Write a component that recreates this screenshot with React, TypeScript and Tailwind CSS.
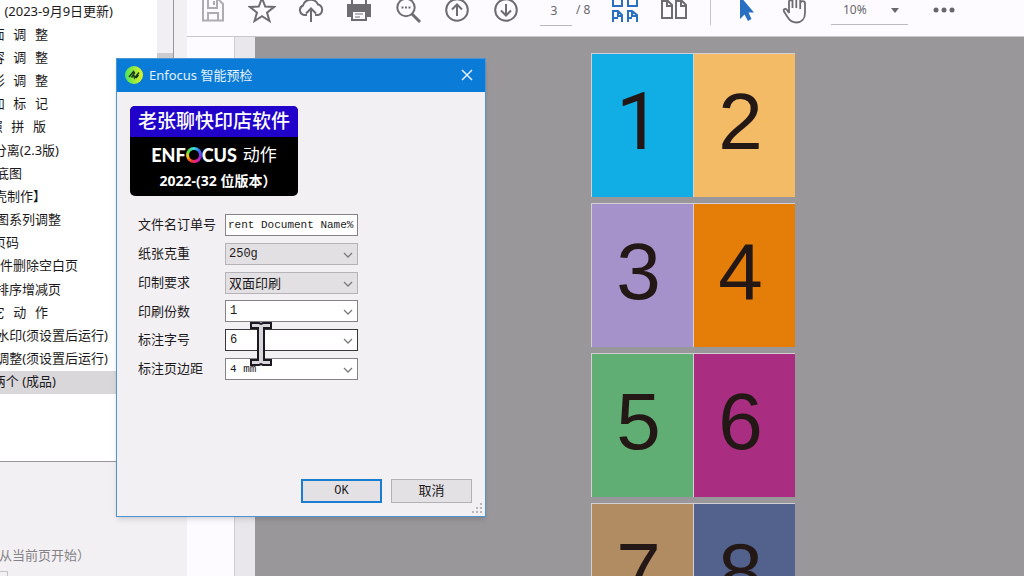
// App.tsx
import type { ReactNode } from 'react';

interface Item { text: string; end: string }

// the list is scrolled sideways, so every row is placed by its right end
const ITEMS: Item[] = [
  { text: '(2023-9月9日更新)', end: 'w-[113px]' },
  { text: '面  调  整', end: 'w-12' },
  { text: '容  调  整', end: 'w-12' },
  { text: '形  调  整', end: 'w-12' },
  { text: '加  标  记', end: 'w-12' },
  { text: '照  拼  版', end: 'w-[46px]' },
  { text: '分离(2.3版)', end: 'w-[59px]' },
  { text: '底图', end: 'w-[22px]' },
  { text: '壳制作】', end: 'w-[46px]' },
  { text: '图系列调整', end: 'w-[61px]' },
  { text: '页码', end: 'w-[19px]' },
  { text: '件删除空白页', end: 'w-[78px]' },
  { text: '排序增减页', end: 'w-[61px]' },
  { text: '它  动  作', end: 'w-12' },
  { text: '水印(须设置后运行)', end: 'w-[108px]' },
  { text: '调整(须设置后运行)', end: 'w-[108px]' },
  { text: '两个 (成品)', end: 'w-14' },
];

const SANS = 'font-["Liberation_Sans",sans-serif]';

const PAGES = [
  [{ n: 1, bg: 'bg-[#11aee6]', font: 'font-["Roboto",sans-serif]' }, { n: 2, bg: 'bg-[#f3bb66]', font: SANS }],
  [{ n: 3, bg: 'bg-[#a692cb]', font: SANS }, { n: 4, bg: 'bg-[#e57e08]', font: SANS }],
  [{ n: 5, bg: 'bg-[#60ae74]', font: SANS }, { n: 6, bg: 'bg-[#a92e82]', font: SANS }],
  [{ n: 7, bg: 'bg-[#b18b62]', font: SANS }, { n: 8, bg: 'bg-[#52628c]', font: SANS }],
];

const FIELDS = [
  { id: 'weight', label: '纸张克重', value: '250g', cls: 'bg-[#e2e0e3] border-[#b5b3b7] text-[12px] pl-[3px] font-["Liberation_Mono",monospace]' },
  { id: 'sides', label: '印制要求', value: '双面印刷', cls: 'bg-[#e2e0e3] border-[#b5b3b7] text-[13px] pl-[3px]' },
  { id: 'copies', label: '印刷份数', value: '1', cls: 'bg-white border-[#858387] text-[12px] pl-1 font-["Liberation_Mono",monospace]' },
  { id: 'size', label: '标注字号', value: '6', cls: 'bg-white border-[#39373b] text-[12px] pl-1 font-["Liberation_Mono",monospace]' },
  { id: 'margin', label: '标注页边距', value: '4 mm', cls: 'bg-white border-[#858387] text-[11px] pl-1 font-["Liberation_Mono",monospace]' },
];

export default function App() {
  return (
    <div className="relative flex h-screen overflow-hidden bg-[#f2f0f3] text-[#1c1a20] font-['Noto_Sans','Noto_Sans_CJK_SC',sans-serif]">
      <Sidebar />
      <main className="flex min-w-0 flex-1 flex-col">
        <Toolbar />
        <div className="flex min-h-0 flex-1">
          <div className="w-12 shrink-0 border-r border-[#cfcdd1] bg-[#fdfbff]" />
          <div className="w-5 shrink-0 bg-[#e9e7eb]" />
          <div className="flex min-w-0 flex-1 flex-col gap-1.5 overflow-hidden bg-[#99979a] pt-4 pl-[336px]">
            {PAGES.map((spread) => (
              <div key={spread[0].n} className="flex h-36 w-[204px] shrink-0">
                {spread.map((p) => (
                  <div key={p.n} className={`flex flex-1 items-center justify-center border-t border-l border-[#d3d0d5] pr-2 pb-2 text-[80px] leading-none text-[#231815] ${p.font} ${p.bg}`}>
                    {p.n}
                  </div>
                ))}
              </div>
            ))}
          </div>
        </div>
      </main>
      <PreflightDialog />
    </div>
  );
}

function Sidebar() {
  return (
    <aside className="flex w-[187px] shrink-0 flex-col overflow-hidden text-[13px]">
      <div className="flex h-[462px] w-[174px] shrink-0 border-r border-b border-[#98969a] bg-white">
        <ul className="flex h-[394px] flex-1 flex-col">
          {ITEMS.map((it, i) => (
            <li key={it.text} className={`flex flex-1 items-center pb-0.5 ${i === ITEMS.length - 1 ? 'bg-[#d9d7da]' : ''}`}>
              <span className={`flex justify-end leading-5 whitespace-pre ${it.end}`}>
                <span>{it.text.replace(/ {2}/g, '\u2002\u2009')}</span>
              </span>
            </li>
          ))}
        </ul>
        <div className="flex w-4 flex-col bg-[#f1eff3] pt-[53px]">
          <div className="h-40 bg-[#cdcbcf]" />
        </div>
      </div>
      <div className="flex flex-col gap-1.5 pt-[83px] text-[#858387]">
        <span className="flex w-[90px] justify-end leading-5 whitespace-nowrap"><span>从当前页开始）</span></span>
        <span className="h-5 w-2 border-t border-r border-[#c5c3c7]" />
      </div>
    </aside>
  );
}

function Tool({ label, children, cls = 'w-7' }: { label: string; children: ReactNode; cls?: string }) {
  return (
    <button type="button" aria-label={label} className={`flex h-7 shrink-0 items-center justify-center ${cls}`}>
      <svg width="28" height="28" viewBox="0 0 28 28" fill="none" stroke="#6e6c70" strokeWidth="2" className="shrink-0">{children}</svg>
    </button>
  );
}

function Toolbar() {
  return (
    <header className="flex h-[37px] shrink-0 items-start border-b border-[#c9c7cb] bg-[#fdfbff] pl-0.5 text-[12px] text-[#69676b]">
      <div className="-mt-1 flex h-8 items-start">
        <div className="flex w-[341px] shrink-0 justify-around">
          <Tool label="保存">
            <g stroke="#aeacb0">
              <path d="M4 3H19L24 8V24.500H4Z" />
              <path d="M9 3V12H18V3M9 24V17H19V24M15 5V9" />
            </g>
          </Tool>
          <Tool label="收藏">
            <path d="M14 2L17.2 10.6L26 11L19 16.6L21.5 25L14 20.2L6.500 25L9 16.600L2 11L10.800 10.600Z" />
          </Tool>
          <Tool label="上传">
            <path d="M10 19H7A5 5 0 0 1 6 9.500A8 8 0 0 1 21 8.500A5.400 5.400 0 0 1 21 19H18" />
            <path d="M14 26V13M9 17.500L14 12.500L19 17.500" />
          </Tool>
          <Tool label="打印">
            <path d="M7 9V2H21V9" fill="#fdfbff" />
            <path d="M2 8H26V21H22V16H6V21H2Z" fill="#6e6c70" stroke="none" />
            <path d="M7 15H21V24H7Z" fill="#fdfbff" />
            <path d="M10 18H18M10 21H15" strokeWidth="1" />
          </Tool>
          <Tool label="查找">
            <circle cx="12" cy="11.500" r="8.700" />
            <path d="M18 18L26 26" strokeWidth="3" />
            <path d="M7.500 11.500H17" strokeDasharray="2 1.500" />
          </Tool>
          <Tool label="上一页">
            <circle cx="14" cy="14" r="10.800" />
            <path d="M14 20V9M9 13.500L14 8.500L19 13.500" />
          </Tool>
          <Tool label="下一页">
            <circle cx="14" cy="14" r="10.800" />
            <path d="M14 8V19M9 14.500L14 19.500L19 14.500" />
          </Tool>
        </div>
        <div className="flex shrink-0 items-start pl-2.5">
          <input aria-label="页码" defaultValue="3" className="h-[30px] w-8 border-b border-[#bbb9bd] pr-1 text-center" />
          <span className="w-[38px] pl-1 leading-7 whitespace-pre">/ 8</span>
        </div>
        <div className="flex shrink-0 items-start gap-[22px]">
          <Tool label="缩略图">
            <g stroke="#2a70c2">
              <path d="M3 1H12V10H3ZM18 1H27V10H18Z" />
              <path d="M3 26V15H8L12 19V26M8 15V20H12M3 22H8M18 26V15H22L27 19V26M22 15V20H27M18 22H22" />
            </g>
          </Tool>
          <Tool label="双页">
            <path d="M2 5H8L12 9V22H2ZM7 5V10H12M16 5H22L26 9V22H16ZM21 5V10H26" />
          </Tool>
          <span className="h-[29px] w-px bg-[#c5c3c7]" />
          <Tool label="选择" cls="w-[26px]">
            <path d="M8 0V23L12.500 18.500L16 25L19.500 23L16.500 16.500H22Z" fill="#2a70c2" stroke="none" />
          </Tool>
          <Tool label="手形">
            <path d="M8 17V5.500A1.800 1.800 0 0 1 11.500 5.500V12M11.500 12V3.500A1.800 1.800 0 0 1 15.300 3.500V12M15.300 12V4.500A1.800 1.800 0 0 1 19.200 4.500V13M19.200 13V7.500A1.800 1.800 0 0 1 24 7.500V17C24 23 20.500 26.500 15.500 26.500C11 26.500 8.500 24.500 6.500 21L3 15.500C2 13 4.500 12 6 14L8 17" strokeWidth="1.800" />
          </Tool>
          <span className="relative">
            <select aria-label="缩放" className="h-[29px] w-[77px] appearance-none border-b border-[#bbb9bd] pl-3">
              <option>10%</option>
            </select>
            <svg width="10" height="5" viewBox="0 0 10 5" className="pointer-events-none absolute top-3 right-2"><path d="M1 0H9L5 5Z" fill="#69676b" /></svg>
          </span>
          <Tool label="更多">
            <g fill="#69676b" stroke="none">
              <circle cx="6" cy="14" r="2.500" /><circle cx="14" cy="14" r="2.500" /><circle cx="22" cy="14" r="2.500" />
            </g>
          </Tool>
        </div>
      </div>
    </header>
  );
}

function PreflightDialog() {
  return (
    <section role="dialog" aria-label="Enfocus 智能预检" className="absolute top-[58px] left-[116px] flex h-[459px] w-[370px] flex-col border border-[#4b96d2] bg-[#f2f0f3] shadow-md">
      <div className="flex h-[33px] shrink-0 items-center gap-1.5 bg-[#0a7bd6] px-2 pb-0.5 text-[13px] text-[#e3f1fd]">
        <svg width="18" height="18" viewBox="0 0 18 18">
          <defs>
            <linearGradient id="lime" x1="0" y1="0" x2="1" y2="0">
              <stop offset="0" stopColor="#4be35c" /><stop offset="1" stopColor="#e2f322" />
            </linearGradient>
          </defs>
          <circle cx="9" cy="9" r="9" fill="url(#lime)" />
          <path d="M4 11L8.500 5.500L9.500 7L6.500 11.500M8.500 8.500L9.500 12L14 6.500M11 12L13.500 9" fill="none" stroke="#16351a" strokeWidth="1.400" />
        </svg>
        <h1 className="flex-1 leading-5">Enfocus 智能预检</h1>
        <button type="button" aria-label="关闭" className="flex h-5 w-5 items-center justify-center">
          <svg width="12" height="12" viewBox="0 0 12 12"><path d="M1 1L11 11M11 1L1 11" stroke="#e3f1fd" strokeWidth="1.500" /></svg>
        </button>
      </div>

      <div className="flex flex-1 flex-col px-[13px] pt-[14px] pb-[13px]">
        <Banner />
        <form className="mt-[18px] flex h-[166px] flex-col justify-between pl-2">
          <div className="flex h-[22px] items-center">
            <label htmlFor="order" className="w-[87px] text-[13px] whitespace-nowrap">文件名订单号</label>
            <input id="order" defaultValue="rent Document Name%" className="h-[22px] w-[133px] border border-[#858387] bg-white pl-0.5 font-['Liberation_Mono',monospace] text-[11px]" />
          </div>
          {FIELDS.map((f) => (
            <div key={f.id} className="flex h-[22px] items-center">
              <label htmlFor={f.id} className="w-[87px] text-[13px] whitespace-nowrap">{f.label}</label>
              <span className="relative flex">
                <select id={f.id} className={`h-[22px] w-[133px] appearance-none border leading-5 ${f.cls}`}>
                  <option>{f.value}</option>
                </select>
                <svg width="10" height="6" viewBox="0 0 10 6" fill="none" className="pointer-events-none absolute top-[9px] right-[5px]">
                  <path d="M1 1L5 5L9 1" stroke="#7b797d" strokeWidth="1.300" />
                </svg>
              </span>
            </div>
          ))}
        </form>
        <div className="mt-auto flex justify-end gap-[9px] text-[13px]">
          <button type="button" className="h-6 w-[81px] border-2 border-[#1b7dd0] bg-[#e3e1e4] font-['Liberation_Mono',monospace] text-[12px]">OK</button>
          <button type="button" className="h-6 w-[81px] border border-[#b3b1b5] bg-[#e3e1e4]">取消</button>
        </div>
      </div>

      <svg width="11" height="11" viewBox="0 0 11 11" fill="#b9b7bb" className="absolute right-0.5 bottom-0.5">
        <path d="M8 0h2v2h-2zM4 4h2v2h-2zM8 4h2v2h-2zM0 8h2v2h-2zM4 8h2v2h-2zM8 8h2v2h-2z" />
      </svg>
      {/* text cursor */}
      <svg width="22" height="44" viewBox="0 0 22 44" className="pointer-events-none absolute top-[263px] left-[133px]">
        <path d="M1 1H9L11 2L13 1H21V6H14V38H21V43H13L11 42L9 43H1V38H8V6H1Z" fill="#d9d7db" stroke="#1c1a20" strokeWidth="2" />
      </svg>
    </section>
  );
}

function Banner() {
  return (
    <div className="flex h-[90px] w-[168px] shrink-0 flex-col overflow-hidden rounded-[5px] bg-black text-white">
      <div className="flex h-[31px] items-center justify-center bg-[#2102cb] text-[19px] font-medium whitespace-nowrap">老张聊快印店软件</div>
      <div className="flex h-9 items-center justify-center gap-1.5">
        <span className="flex items-center font-['Lato',sans-serif] text-[18px] leading-5 font-black">
          ENF
          <span className="flex h-4 w-4 items-center justify-center rounded-full bg-[conic-gradient(#38d6e8,#3b6cf0,#8a2be2,#e0209a,#f03a2a,#f5c518,#4ddb4a,#38d6e8)]">
            <span className="h-2.5 w-2.5 rounded-full bg-black" />
          </span>
          CUS
        </span>
        <span className="text-[17px] leading-5">动作</span>
      </div>
      <p className="pl-2 text-center text-[14px] leading-4 font-bold whitespace-nowrap">2022-(32 位版本）</p>
    </div>
  );
}
